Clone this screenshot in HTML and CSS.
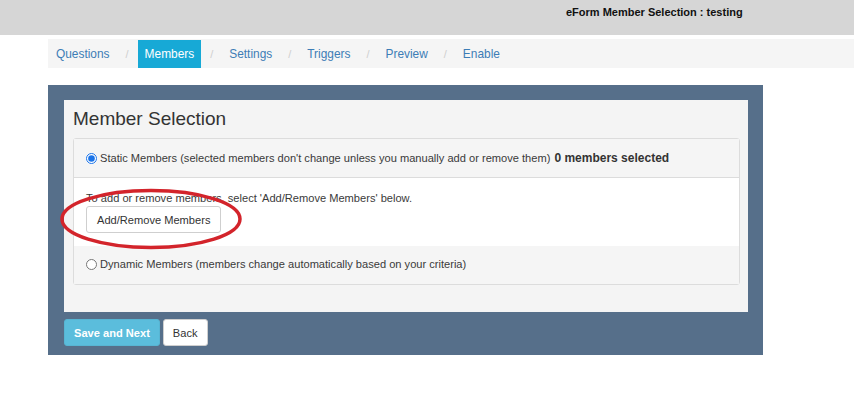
FILE: index.html
```html
<!DOCTYPE html>
<html>
<head>
<meta charset="utf-8">
<link rel="stylesheet" href="styles.css">
</head>
<body>
<header class="topbar"><span class="title">eForm Member Selection : testing</span></header>
<nav class="crumbs">
  <a class="crumb">Questions</a><span class="sep">/</span>
  <a class="crumb active">Members</a><span class="sep">/</span>
  <a class="crumb">Settings</a><span class="sep">/</span>
  <a class="crumb">Triggers</a><span class="sep">/</span>
  <a class="crumb">Preview</a><span class="sep">/</span>
  <a class="crumb">Enable</a>
</nav>
<main class="panel">
  <section class="inner">
    <h1 class="heading">Member Selection</h1>
    <div class="box">
      <div class="row row-head">
        <label class="opt"><input type="radio" name="m" checked class="radio"><span>Static Members (selected members don't change unless you manually add or remove them)</span> <b class="count">0 members selected</b></label>
      </div>
      <div class="row row-body">
        <p class="hint">To add or remove members, select 'Add/Remove Members' below.</p>
        <button class="btn">Add/Remove Members</button>
        <svg class="mark" width="190" height="66" viewBox="0 0 190 66"><ellipse cx="95" cy="33" rx="89" ry="28.5" fill="none" stroke="#d3242b" stroke-width="3.5"/></svg>
      </div>
      <div class="row row-foot">
        <label class="opt"><input type="radio" name="m" class="radio"><span>Dynamic Members (members change automatically based on your criteria)</span></label>
      </div>
    </div>
  </section>
  <div class="actions">
    <button class="btn btn-info">Save and Next</button>
    <button class="btn btn-back">Back</button>
  </div>
</main>
</body>
</html>
```

FILE: styles.css
```css
* { box-sizing: border-box; }
body {
  margin: 0;
  background: #fff;
  font-family: "Liberation Sans", Arial, sans-serif;
  font-size: 11.1px;
  color: #3a3a3a;
}
.topbar {
  height: 35px;
  background: #d6d6d6;
  padding-left: 566px;
  display: flex;
  align-items: flex-start;
  padding-top: 5px;
}
.title {
  font-weight: bold;
  font-size: 11px;
  color: #111;
  line-height: 14px;
}
.crumbs {
  margin: 4px 0 0 48px;
  height: 29px;
  background: #f5f5f5;
  display: flex;
  align-items: stretch;
  padding-left: 1px;
  font-size: 11.9px;
}
.crumb {
  color: #3d7db6;
  padding: 0 7px;
  display: flex;
  align-items: center;
  margin-top: 1px;
}
.crumb.active {
  background: #17a9d6;
  color: #fff;
}
.sep {
  color: #cfcfcf;
  padding: 0 9px;
  display: flex;
  align-items: center;
  font-size: 11px;
}
.panel {
  margin: 17px 0 0 48px;
  width: 715px;
  background: #566f8a;
  padding: 15px 15px 9px 16px;
}
.inner {
  background: #f4f4f4;
  padding: 8px 8px 27px 9px;
}
.heading {
  margin: 0 0 8px;
  font-size: 19px;
  line-height: 22px;
  font-weight: normal;
  color: #333;
}
.box {
  border: 1px solid #dcdcdc;
  border-radius: 3px;
  background: #fff;
}
.row {
  padding: 10px 12px;
}
.row-head {
  background: #f5f5f5;
  border-bottom: 1px solid #dcdcdc;
  line-height: 18px;
}
.row-foot {
  background: #f5f5f5;
  line-height: 18px;
  padding-top: 9px;
  padding-bottom: 11px;
}
.row-body {
  position: relative;
  padding: 12px 12px 13px;
  background: #fff;
}
.opt {
  display: flex;
  align-items: center;
}
.radio {
  width: 11px;
  height: 11px;
  margin: 0 3px 0 0;
  accent-color: #1a73e8;
}
.count {
  font-size: 12px;
  margin-left: 4px;
  color: #333;
}
.hint {
  margin: 0;
  line-height: 16px;
}
.btn {
  font-family: "Liberation Sans", Arial, sans-serif;
  font-size: 11.1px;
  color: #333;
  background: #fff;
  border: 1px solid #cfcfcf;
  border-radius: 3px;
  height: 27px;
  padding: 0 10px;
}
.btn-info {
  background: #5bbddc;
  border-color: #57b5d3;
  color: #fff;
  font-weight: bold;
  padding: 0 9px;
}
.btn-back {
  padding: 0 9px;
}
.mark {
  position: absolute;
  left: -18px;
  top: 8px;
}
.actions {
  display: flex;
  gap: 3px;
  margin-top: 7px;
}
```
